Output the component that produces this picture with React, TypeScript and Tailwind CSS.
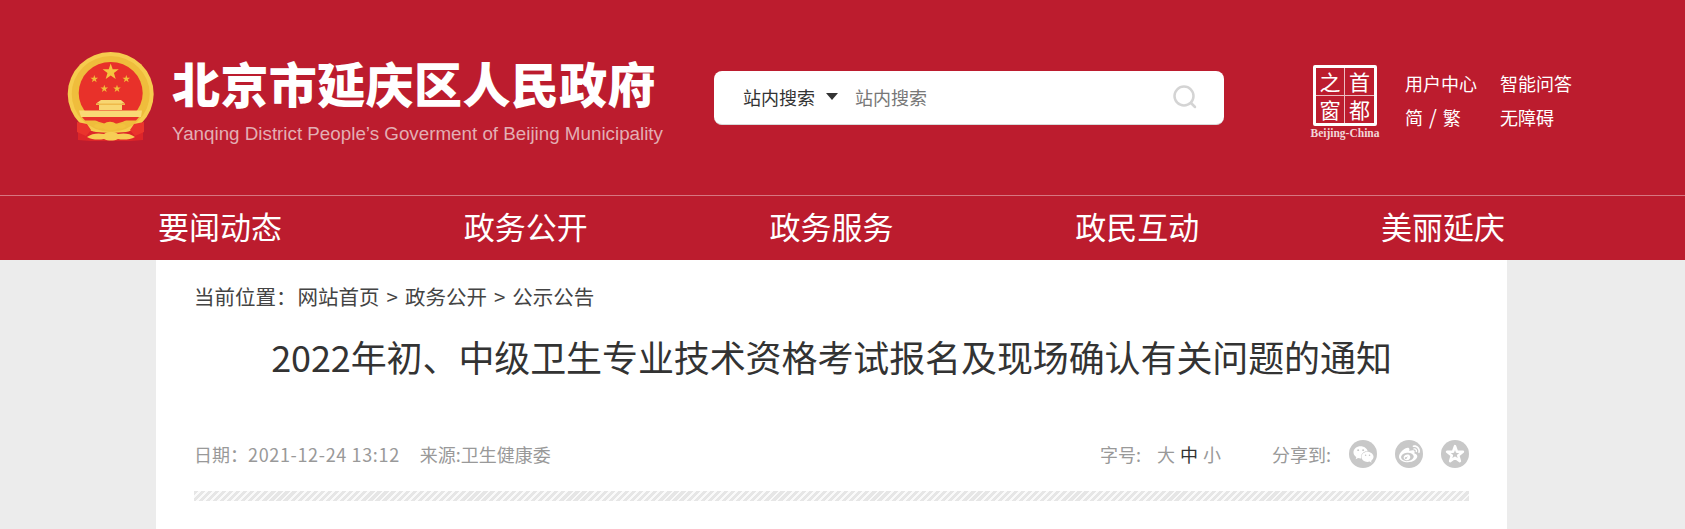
import React from 'react';
import { FaWeibo, FaWeixin } from 'react-icons/fa';

const CJK = "font-['Noto_Sans_CJK_SC','Liberation_Sans',sans-serif]";

const starPoints = (cx: number, cy: number, r: number) =>
  Array.from({ length: 10 }, (_, i) => {
    const radius = i % 2 === 0 ? r : r * 0.4;
    const angle = (Math.PI / 5) * i - Math.PI / 2;
    return `${cx + radius * Math.cos(angle)},${cy + radius * Math.sin(angle)}`;
  }).join(' ');

const Emblem = () => (
  <svg width="92" height="92" viewBox="0 0 92 92" className="shrink-0">
    <ellipse cx="45.7" cy="44" rx="43" ry="42" fill="#f6cc4e" />
    <ellipse cx="45.7" cy="44" rx="39" ry="38" fill="#efbd3c" />
    <ellipse cx="45.7" cy="43" rx="32" ry="31" fill="#e8312a" />
    <polygon points={starPoints(45.7, 22, 8.5)} fill="#f5c53f" />
    <polygon points={starPoints(29.3, 29, 4)} fill="#f2bc3a" />
    <polygon points={starPoints(61.3, 29, 4)} fill="#f2bc3a" />
    <polygon points={starPoints(39.3, 38.7, 4)} fill="#f2bc3a" />
    <polygon points={starPoints(52, 38.7, 4)} fill="#f2bc3a" />
    <path d="M36 50h20l4 3.500h-3V60H34v-6.500h-3z" fill="#f8d671" />
    <path d="M31 53.500h29V55H31z" fill="#efb94a" />
    <path d="M14 60.500h63l-1 6.500H16z" fill="#f9d975" />
    <path d="M17 67h57l-3 3.500H20z" fill="#e8312a" />
    <path d="M13 74c6 3 11 7 18 8 9 1 21 1 30 0 7-1 12-5 17-8v16l-12 1H25l-12-1z" fill="#dd2529" />
    <path d="M12 72l10 2 4 6-5 6-9-4zM79 72l-10 2-4 6 5 6 9-4z" fill="#ea342c" />
    <path d="M29 76c3-4 7-1 10-2 3-3 9-3 12 0 3 1 7-2 10 2-2 3-6 3-8 2-2 3-13 3-15 0-2 1-7 1-9-2z" fill="#f2c23e" />
    <path d="M22 87c5-4 12-4 17-3 4-3 10-3 14 0 5-1 12-1 17 3-5 3-13 3-17 2-4 2-10 2-14 0-5 1-12 1-17-2z" fill="#f7cd55" />
  </svg>
);

const CapitalLogo = () => (
  <div className="w-[70px] shrink-0 flex flex-col items-center">
    <div className="w-[64px] h-[61px] border-[3px] border-white rounded-[2px] grid grid-cols-2 grid-rows-2 text-white text-[21px] leading-none font-['Noto_Sans_CJK_TC',serif]">
      <span className="flex items-center justify-center border-r border-b border-white/70">之</span>
      <span className="flex items-center justify-center border-b border-white/70">首</span>
      <span className="flex items-center justify-center border-r border-white/70">窗</span>
      <span className="flex items-center justify-center">都</span>
    </div>
    <span className="mt-[1px] text-[11.500px] leading-[12px] font-bold text-[#f2d5d8] whitespace-nowrap font-['Liberation_Serif',serif]">Beijing-China</span>
  </div>
);

const ShareIcon = ({ children }: { children: React.ReactNode }) => (
  <span className="w-[28px] h-[28px] rounded-full bg-[#c8c8c8] flex items-center justify-center text-white">{children}</span>
);

const navItems = ['要闻动态', '政务公开', '政务服务', '政民互动', '美丽延庆'];

export default function App() {
  return (
    <div className={`h-[529px] overflow-hidden bg-[#ececec] ${CJK}`}>
      <header className="h-[195px] bg-[#bc1c2e] pl-[65px] flex items-start">
        <div className="mt-[50px]"><Emblem /></div>
        <div className="ml-[15px] mt-[56px] w-[490px] shrink-0">
          <div className="text-[48px] leading-[52px] tracking-[0.4px] font-black text-white whitespace-nowrap">北京市延庆区人民政府</div>
          <div className="mt-[16px] text-[18.800px] leading-[20px] text-[#e3aeb4] whitespace-nowrap font-['Liberation_Sans',sans-serif]">Yanqing District People’s Goverment of Beijing Municipality</div>
        </div>
        <div className="ml-[52px] mt-[71px] w-[510px] h-[54px] shrink-0 bg-white rounded-[8px] border-b border-[#d8d8d8] flex items-center pl-[29px] pr-[26px] text-[18px] leading-[24px] pb-[2px]">
          <span className="text-[#333] w-[72px] whitespace-nowrap">站内搜索</span>
          <span className="ml-[11px] w-0 h-0 border-x-[6px] border-x-transparent border-t-[7px] border-t-[#333]" />
          <span className="ml-[17px] text-[#777] whitespace-nowrap">站内搜索</span>
          <svg width="26" height="26" viewBox="0 0 26 26" fill="none" stroke="#d4d4d4" strokeWidth="2.500" className="ml-auto" strokeLinecap="round">
            <circle cx="12" cy="12" r="9.500" />
            <path d="M19 19l4 4" />
          </svg>
        </div>
        <div className="ml-[86px] mt-[65px]"><CapitalLogo /></div>
        <div className="ml-[25px] mt-[70px] grid grid-cols-[72px_72px] gap-x-[23px] gap-y-[8px] text-[18px] leading-[26px] text-white whitespace-nowrap">
          <span>用户中心</span>
          <span>智能问答</span>
          <span>简<span className="mx-[6px] text-[20px]">/</span>繁</span>
          <span>无障碍</span>
        </div>
      </header>

      <nav className="h-[65px] bg-[#bc1c2e] border-t border-white/40 pl-[158px] pr-[180px] pb-[4px] flex items-center justify-between text-[31px] leading-[40px] text-white">
        {navItems.map(item => (
          <span key={item} className="whitespace-nowrap">{item}</span>
        ))}
      </nav>

      <main className="ml-[156px] w-[1351px] h-[269px] bg-white px-[38px]">
        <div className="pt-[21px] text-[20.500px] leading-[30px] text-[#444] whitespace-nowrap">
          当前位置：<span className="ml-[1px]">网站首页</span><span className="mx-[7px]">&gt;</span>政务公开<span className="mx-[7px]">&gt;</span>公示公告
        </div>
        <h1 className="mt-[20px] text-center text-[36px] leading-[50px] tracking-[-0.1px] font-normal text-[#333] whitespace-nowrap">
          2022年初、中级卫生专业技术资格考试报名及现场确认有关问题的通知
        </h1>
        <div className="mt-[59px] h-[28px] flex items-center text-[18px] leading-[28px] text-[#999] whitespace-nowrap">
          <span>日期：<span className="tracking-[0.65px]">2021-12-24 13:12</span></span>
          <span className="ml-[20px]">来源:卫生健康委</span>
          <span className="ml-auto">字号:</span>
          <span className="ml-[16px]">大</span>
          <span className="ml-[5px] text-[#333]">中</span>
          <span className="ml-[5px]">小</span>
          <span className="ml-[51px]">分享到:</span>
          <div className="ml-[18px] flex gap-[18px]">
            <ShareIcon><FaWeixin size={21} /></ShareIcon>
            <ShareIcon><FaWeibo size={21} /></ShareIcon>
            <ShareIcon>
              <svg width="20" height="20" viewBox="0 0 24 24" fill="none" stroke="#fff" strokeWidth="3" strokeLinejoin="round">
                <polygon points={starPoints(12, 12.500, 10)} />
              </svg>
            </ShareIcon>
          </div>
        </div>
        <div className="mt-[23px] h-[10px] bg-[repeating-linear-gradient(135deg,#e6e6e6_0,#e6e6e6_3px,#fafafa_3px,#fafafa_5px)]" />
      </main>
    </div>
  );
}
